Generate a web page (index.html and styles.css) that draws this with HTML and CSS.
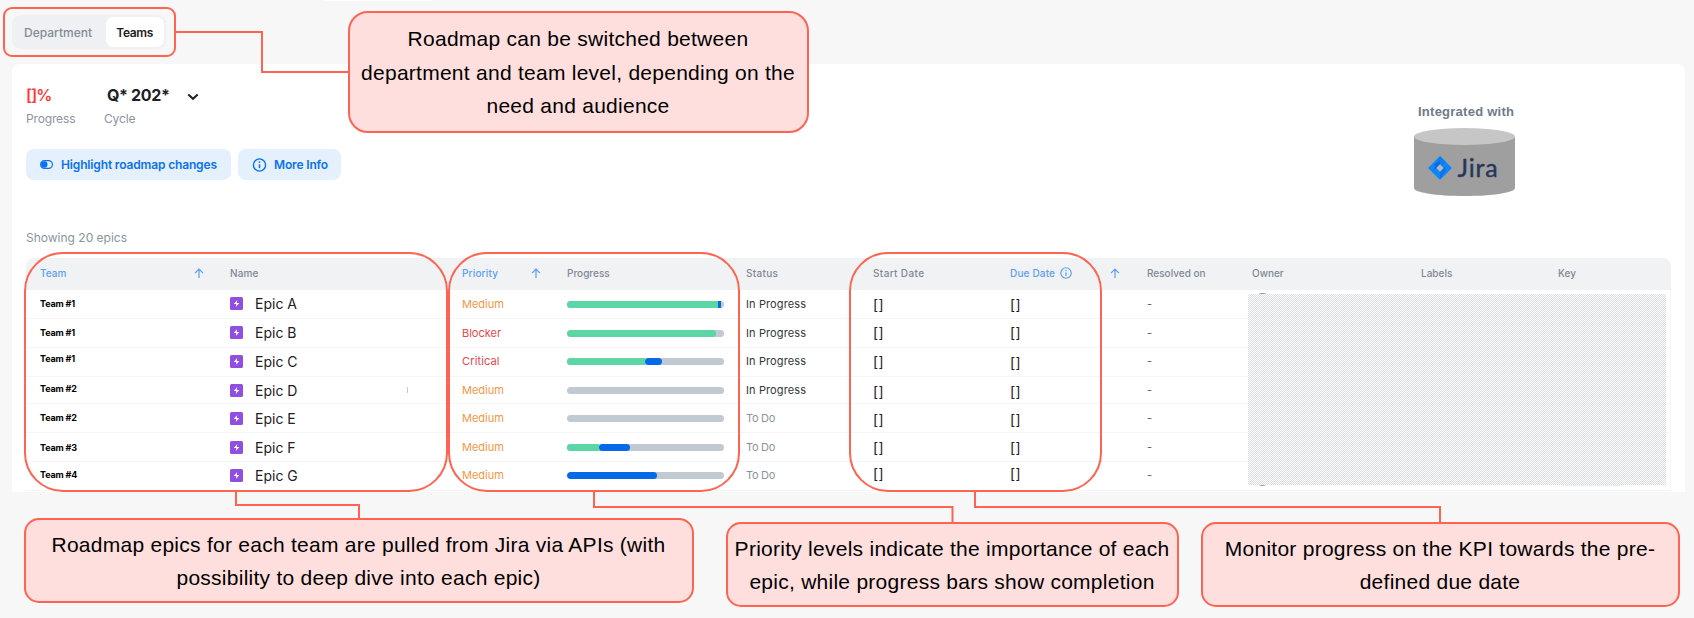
FILE: index.html
```html
<!DOCTYPE html>
<html lang="en">
<head>
<meta charset="utf-8">
<title>Team roadmap</title>
<link rel="stylesheet" href="styles.css">
</head>
<body>
<svg class="defs" width="0" height="0">
  <symbol id="arrow" viewBox="0 0 10 11"><path d="M5 10V1.2M1 5.2L5 1.2L9 5.2" fill="none" stroke="currentColor" stroke-width="1.2"/></symbol>
  <symbol id="info" viewBox="0 0 14 14"><circle cx="7" cy="7" r="6.1" fill="none" stroke="currentColor" stroke-width="1.4"/><path d="M7 6.3V10.2" stroke="currentColor" stroke-width="1.5"/><circle cx="7" cy="4.1" r=".9" fill="currentColor"/></symbol>
  <symbol id="epic" viewBox="0 0 13 13"><rect width="13" height="13" rx="1.6" fill="#904ee2"/><path d="M7.2 3L3.7 7H6.3L5.8 10L9.3 6H6.7Z" fill="#fff"/></symbol>
</svg>
<div class="page">
  <div class="top"><div class="top-edge"></div>
    <div class="switch"><span class="switch-item">Department</span><span class="switch-item active">Teams</span></div>
  </div>
  <main class="card">
    <div class="summary">
      <div class="summary-left">
        <div class="stats">
          <div class="stat"><div class="value red">[]%</div><div class="label">Progress</div></div>
          <div class="stat cycle"><div class="value">Q* 202*<svg class="chevron" width="12" height="8" viewBox="0 0 12 8"><path d="M1.3 1.5L6 5.8L10.7 1.5" fill="none" stroke="#1d2024" stroke-width="2"/></svg></div><div class="label">Cycle</div></div>
        </div>
        <div class="actions">
          <div class="button"><svg width="13" height="9" viewBox="0 0 13 9"><rect x=".6" y=".6" width="11.8" height="7.8" rx="3.9" fill="none" stroke="currentColor" stroke-width="1.2"/><circle cx="4.3" cy="4.5" r="3.2" fill="currentColor"/></svg>Highlight roadmap changes</div>
          <div class="button info"><svg width="15" height="15"><use href="#info"/></svg>More Info</div>
        </div>
      </div>
      <div class="integration">
        <div class="integration-title">Integrated with</div>
        <svg width="101" height="68" viewBox="0 0 101 68">
          <path d="M0 8.5V60C0 64.500 22 68 50.500 68S101 64.500 101 60V8.500Z" fill="#9f9f9f"/>
          <ellipse cx="50.500" cy="8.500" rx="50.500" ry="8.500" fill="#c6c6c6"/>
          <path d="M26 28L38 40L26 52L14 40Z" fill="#0f85fb"/>
          <path d="M26 28L32 34L26 40V36.500L23 33.500Z" fill="#0a78ee" opacity=".5"/>
          <path d="M26 36.500V33L20.500 36V42L23 40Z" fill="#0a5fce" opacity=".65"/>
          <path d="M26 43.500V50L31.500 44V38L29 40Z" fill="#0a5fce" opacity=".45"/>
          <path d="M26 36.300L29.700 40L26 43.700L22.300 40Z" fill="#b4b6ba"/>
          <text class="jira" x="43.500" y="49">Jira</text>
        </svg>
      </div>
    </div>
    <div class="count">Showing 20 epics</div>
    <div class="table">
      <div class="row head">
        <div class="blue sort"><span>Team</span><svg width="10" height="11"><use href="#arrow"/></svg></div>
        <div class="w2">Name</div>
        <div class="blue sort prio"><span class="w2">Priority</span><svg width="10" height="11"><use href="#arrow"/></svg></div>
        <div>Progress</div><div class="w3">Status</div><div class="w4">Start Date</div>
        <div class="blue sort due"><span class="w2">Due Date</span><svg class="hint" width="12" height="12" viewBox="0 0 14 14"><use href="#info"/></svg><svg width="10" height="11"><use href="#arrow"/></svg></div>
        <div>Resolved on</div><div>Owner</div><div>Labels</div><div>Key</div>
      </div>
      <div class="row"><div class="team up1">Team #1</div><div class="name up1"><svg width="13" height="13"><use href="#epic"/></svg>Epic A</div><div class="orange">Medium</div><div><span class="bar"><i class="done flat" style="width:151px"></i><i class="doing flat" style="width:3px"></i></span></div><div class="state">In Progress</div><div class="date">[]</div><div class="date">[]</div><div class="none">-</div></div>
      <div class="row"><div class="team up1">Team #1</div><div class="name up1"><svg width="13" height="13"><use href="#epic"/></svg>Epic B</div><div class="red2">Blocker</div><div><span class="bar"><i class="done" style="width:149px"></i></span></div><div class="state">In Progress</div><div class="date up1">[]</div><div class="date up1">[]</div><div class="none">-</div></div>
      <div class="row"><div class="team up4">Team #1</div><div class="name up1"><svg width="13" height="13"><use href="#epic"/></svg>Epic C</div><div class="red2 crit up1">Critical</div><div class="up1"><span class="bar"><i class="done flat" style="width:78px"></i><i class="doing" style="width:17px"></i></span></div><div class="state up1">In Progress</div><div class="date up1">[]</div><div class="date">[]</div><div class="none up1">-</div></div>
      <div class="row short"><div class="team up2">Team #2</div><div class="name">
        <svg width="13" height="13"><use href="#epic"/></svg>Epic D<span class="tick"></span></div><div class="orange">Medium</div><div><span class="bar"></span></div><div class="state">In Progress</div><div class="date down1">[]</div><div class="date down1">[]</div><div class="none">-</div></div>
      <div class="row"><div class="team up1">Team #2</div><div class="name"><svg width="13" height="13"><use href="#epic"/></svg>Epic E</div><div class="orange">Medium</div><div><span class="bar"></span></div><div class="state todo">To Do</div><div class="date down1">[]</div><div class="date down1">[]</div><div class="none">-</div></div>
      <div class="row"><div class="team">Team #3</div><div class="name"><svg width="13" height="13"><use href="#epic"/></svg>Epic F</div><div class="orange">Medium</div><div><span class="bar"><i class="done flat" style="width:32px"></i><i class="doing" style="width:31px"></i></span></div><div class="state todo">To Do</div><div class="date">[]</div><div class="date">[]</div><div class="none">-</div></div>
      <div class="row"><div class="team up2">Team #4</div><div class="name up1"><svg width="13" height="13"><use href="#epic"/></svg>Epic G</div><div class="orange up1">Medium</div><div class="up1"><span class="bar"><i class="doing" style="width:90px"></i></span></div><div class="state todo up1">To Do</div><div class="date up3">[]</div><div class="date up3">[]</div><div class="none up1">-</div></div>
      <div class="avatar first"></div><div class="avatar last"></div><div class="key-tag"></div>
      <div class="redacted"></div>
    </div>
  </main>
  <svg class="lines" width="1694" height="618" fill="none" stroke="#ff6352" stroke-width="2">
    <rect x="4" y="8" width="171" height="48" rx="8"/>
    <path d="M175 32H262V72H349"/>
    <rect x="25" y="253" width="422" height="238" rx="38"/>
    <rect x="449" y="253" width="290" height="238" rx="38"/>
    <rect x="850" y="253" width="251" height="238" rx="38"/>
    <path d="M236 491V505H359V519"/>
    <path d="M594 491V507H952.500V523"/>
    <path d="M975 491V507H1440V523"/>
  </svg>
  <div class="callout c1">Roadmap can be switched between<br>department and team level, depending on the<br>need and audience</div>
  <div class="callout c2">Roadmap epics for each team are pulled from Jira via APIs (with<br>possibility to deep dive into each epic)</div>
  <div class="callout c3">Priority levels indicate the importance of each<br>epic, while progress bars show completion</div>
  <div class="callout c4">Monitor progress on the KPI towards the pre-<br>defined due date</div>
</div>
</body>
</html>
```
FILE: styles.css
```css
* { box-sizing: border-box; }
body { margin: 0; font-family: Inter, "Liberation Sans", sans-serif; color: #1d2024; }
svg { flex: none; }
.defs { position: absolute; }
.page { position: relative; width: 1694px; height: 618px; background: #f7f7f7; overflow: hidden; white-space: nowrap; }
.top { height: 64px; padding-left: 12px; }
.top-edge { width: 107px; height: 1px; margin: 0 0 14px 313px; background: #fff; }
.switch { display: inline-flex; align-items: center; width: 154px; height: 34px; padding: 2px; border-radius: 9px; background: #eef0f3; font-size: 12px; line-height: 30px; }
.switch-item { width: 93px; height: 30px; padding: 1px 0 0 10px; font-weight: 500; color: #848d97; }
.switch-item.active { width: 58px; padding-left: 10px; border-radius: 7px; background: #fff; color: #1d2024; font-weight: 600; letter-spacing: -.4px; }

.card { width: 1673px; height: 428px; margin-left: 12px; padding: 20px 14px 0; border-radius: 8px 8px 0 0; background: #fff; }
.summary { display: flex; height: 144px; }
.summary-left { width: 1388px; }
.stats { display: flex; }
.stat { width: 78px; }
.value { display: flex; align-items: center; height: 23px; padding-bottom: 2px; font-size: 16px; font-weight: 700; letter-spacing: -.35px; }
.value.red { color: #fb3a3a; font-weight: 600; letter-spacing: -.8px; }
.cycle .value { padding-left: 3px; }
.chevron { margin-left: 17px; margin-top: 4px; }
.label { margin-top: 4px; font-size: 12px; line-height: 15px; letter-spacing: -.15px; color: #8b949e; }
.actions { display: flex; gap: 7px; margin-top: 23px; }
.button { display: flex; align-items: center; width: 205px; height: 31px; padding-left: 14px; gap: 8px; border-radius: 8px; background: #e5f0fd; color: #0b72ee; font-size: 12px; font-weight: 600; letter-spacing: -.15px; }
.button.info { width: 103px; gap: 7px; }
.button.info svg { padding-top: 1px; }
.integration { padding-top: 19px; }
.integration-title { margin-left: 4px; height: 25px; font: 700 13px/17px "Liberation Sans", sans-serif; letter-spacing: .25px; color: #6f7b88; }
.integration svg { display: block; }
.jira { font-family: Lato, sans-serif; font-size: 25px; letter-spacing: .8px; fill: #253858; stroke: #253858; stroke-width: .4px; }
.count { height: 30px; padding-top: 1px; font-size: 12px; line-height: 18px; color: #8b949e; }

.table { position: relative; width: 1645px; }
.row { display: grid; grid-template-columns: 190px 232px 105px 179px 127px 137px 137px 105px 169px 137px 113px; height: 29px; padding-left: 14px; border: solid #f4f5f6; border-width: 0 1px 1px 0; font-size: 11px; }
.row > div { display: flex; align-items: center; }
.row.short { height: 27px; }
.row.head { height: 32px; padding-bottom: 2px; border: 0; border-radius: 8px 8px 0 0; background: #f0f2f4; color: #7f8994; font-size: 10px; font-weight: 500; }
.row .blue { color: #5c9ff2; }
.sort span { width: 154px; }
.prio span { width: 69px; }
.due span { width: 50px; }
.due .hint { margin-right: 38px; }
.w2 { letter-spacing: .16px; }
.w3 { letter-spacing: .32px; }
.w4 { letter-spacing: .36px; }
.row .team { font-size: 9px; font-weight: 700; letter-spacing: -.17px; color: #000; }
.name { font-size: 14px; }
.name svg { margin-right: 12px; }
.tick { width: 1px; height: 6px; margin-left: 110px; background: #c8ccd0; }
.orange { color: #f39845; }
.red2 { color: #e8474d; }
.crit { letter-spacing: .14px; }
.state { letter-spacing: .11px; color: #33373c; }
.todo { letter-spacing: -.3px; color: #8b949e; }
.date { font-size: 14px; letter-spacing: .5px; }
.none { color: #5c6167; }
.row .up1 { padding-bottom: 2px; }
.row .up2 { padding-bottom: 4px; }
.row .up3 { padding-bottom: 5px; }
.row .up4 { padding-bottom: 8px; }
.row .down1 { padding-top: 2px; }
.bar { display: flex; width: 157px; height: 7px; border-radius: 4px; overflow: hidden; background: #c1c9d2; }
.bar i { border-radius: 4px; }
.bar .flat { border-radius: 0; }
.bar .flat + .doing:not(.flat) { box-shadow: -4px 0 0 -3px #5cd6a4; }
.done { background: #5cd6a4; }
.doing { background: #0569e8; }
.redacted { position: absolute; left: 1222px; top: 36px; width: 418px; height: 191px; background: repeating-conic-gradient(#dcdde1 0 25%, #fff 0 50%) 0 0 / 2px 2px; }
.avatar { position: absolute; left: 1228px; width: 17px; height: 17px; border-radius: 50%; background: #8d9094; }
.avatar.first { top: 35px; }
.avatar.last { top: 211px; }
.key-tag { position: absolute; left: 1534px; top: 216px; width: 65px; height: 12px; border-radius: 3px; background: #e5f0fd; }

/* Annotations floating over the roadmap */
.lines { position: absolute; left: 0; top: 0; }
.callout { position: absolute; display: flex; align-items: center; justify-content: center; padding: 1px 1px 0 0; border: 2px solid #ff6352; border-radius: 15px; background: #ffdfdd; color: #000; font: 21px/33.5px "Liberation Sans", Arial, sans-serif; letter-spacing: .26px; text-align: center; }
.c1 { left: 348px; top: 11px; width: 461px; height: 122px; border-radius: 20px; }
.c2 { left: 24px; top: 518px; width: 670px; height: 85px; }
.c3 { left: 726px; top: 522px; width: 453px; height: 85px; }
.c4 { left: 1201px; top: 522px; width: 479px; height: 85px; }
```
